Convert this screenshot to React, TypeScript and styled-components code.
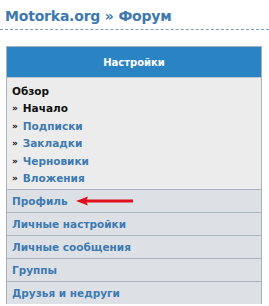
import styled, { createGlobalStyle } from "styled-components";

const GlobalStyle = createGlobalStyle`
  html, body {
    margin: 0;
    padding: 0;
    background: #ffffff;
  }
  body {
    font-family: "DejaVu Sans", Verdana, sans-serif;
  }
`;

const Page = styled.div`
  width: 269px;
  height: 306px;
  overflow: hidden;
  background: #ffffff;
`;

const Breadcrumb = styled.div`
  padding: 8px 0 0 5px;
  height: 21px;
  font-size: 14px;
  font-weight: bold;
  color: #3d79ae;
  letter-spacing: -0.2px;
`;

const Dashed = styled.div`
  border-top: 1px dashed #7f9db5;
  margin-bottom: 16px;
`;

const Panel = styled.div`
  margin: 0 7px 0 6px;
  border: 1px solid #a9b3bd;
  border-bottom: none;
`;

const Header = styled.div`
  height: 30px;
  background: #2a84c4;
  color: #ffffff;
  font-size: 10px;
  font-weight: bold;
  display: flex;
  align-items: center;
  justify-content: center;
`;

const Overview = styled.div`
  background: #ececec;
  padding: 4px 0 2px 5px;
  border-top: 1px solid #bfc6cd;
`;

const Line = styled.div<{ $active?: boolean; $sub?: boolean }>`
  height: 17.5px;
  display: flex;
  align-items: center;
  font-size: 10.5px;
  font-weight: bold;
  color: ${(p) => (p.$sub && !p.$active ? "#3d7ab3" : "#111111")};
`;

const Raquo = styled.span`
  color: #111111;
  font-size: 9px;
  margin-right: 5px;
`;

const Row = styled.div`
  position: relative;
  height: 22px;
  border-top: 1px solid #a9b3bd;
  background: #dde1e6;
  padding-left: 5px;
  display: flex;
  align-items: center;
  font-size: 10.5px;
  font-weight: bold;
  color: #3d7ab3;
`;

const Arrow = styled.svg`
  position: absolute;
  left: 68px;
  top: 6px;
`;

const subs = ["Подписки", "Закладки", "Черновики", "Вложения"];
const rows = ["Профиль", "Личные настройки", "Личные сообщения", "Группы", "Друзья и недруги"];

export default function App() {
  return (
    <Page>
      <GlobalStyle />
      <Breadcrumb>Motorka.org » Форум</Breadcrumb>
      <Dashed />
      <Panel>
        <Header>Настройки</Header>
        <Overview>
          <Line>Обзор</Line>
          <Line $sub $active>
            <Raquo>»</Raquo>Начало
          </Line>
          {subs.map((s) => (
            <Line key={s} $sub>
              <Raquo>»</Raquo>
              {s}
            </Line>
          ))}
        </Overview>
        {rows.map((r, i) => (
          <Row key={r}>
            {r}
            {i === 0 && (
              <Arrow width="60" height="10" viewBox="0 0 60 10">
                <path d="M8 5 H58" stroke="#e0101a" strokeWidth="3" />
                <path d="M1 5 L13 0.5 L11 5 L13 9.5 Z" fill="#e0101a" />
              </Arrow>
            )}
          </Row>
        ))}
      </Panel>
    </Page>
  );
}
